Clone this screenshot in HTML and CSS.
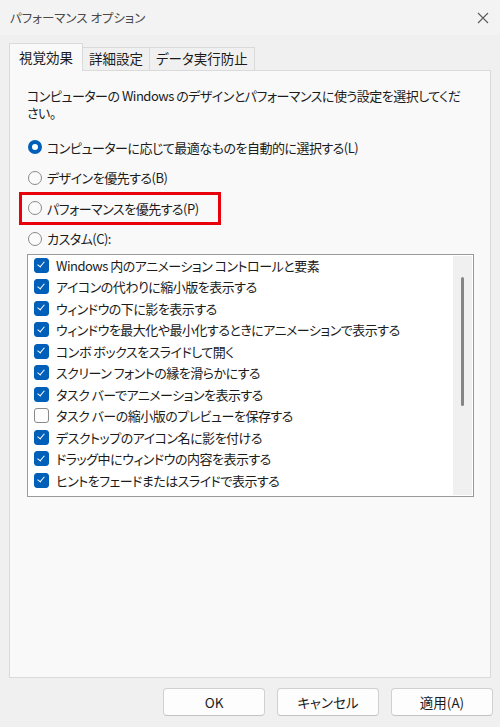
FILE: index.html
```html
<!DOCTYPE html>
<html lang="ja">
<head>
    <meta charset="UTF-8">
    <meta name="viewport" content="width=device-width, initial-scale=1.0">
    <title>パフォーマンス オプション</title>
    <link rel="stylesheet" href="styles.css">
</head>
<body>
    <div class="window">
        <div class="titlebar">
            <span class="title">パフォーマンス オプション</span>
            <svg class="close" width="12" height="12" viewBox="0 0 12 12">
                <path d="M1 1 L11 11 M11 1 L1 11" stroke="#5a5a5a" stroke-width="1.1" fill="none"/>
            </svg>
        </div>

        <div class="tabs">
            <div class="tab active">視覚効果</div>
            <div class="tab">詳細設定</div>
            <div class="tab">データ実行防止</div>
        </div>

        <div class="panel">
            <p class="intro">コンピューターの Windows のデザインとパフォーマンスに使う設定を選択してください。</p>

            <div class="options">
                <label class="radio-row">
                    <span class="radio checked"></span>コンピューターに応じて最適なものを自動的に選択する(L)
                </label>
                <label class="radio-row">
                    <span class="radio"></span>デザインを優先する(B)
                </label>
                <label class="radio-row highlight">
                    <span class="radio"></span>パフォーマンスを優先する(P)
                </label>
                <label class="radio-row">
                    <span class="radio"></span>カスタム(C):
                </label>
            </div>

            <div class="listbox">
                <ul class="items">
                    <li><span class="check on"></span>Windows 内のアニメーション コントロールと要素</li>
                    <li><span class="check on"></span>アイコンの代わりに縮小版を表示する</li>
                    <li><span class="check on"></span>ウィンドウの下に影を表示する</li>
                    <li><span class="check on"></span>ウィンドウを最大化や最小化するときにアニメーションで表示する</li>
                    <li><span class="check on"></span>コンボ ボックスをスライドして開く</li>
                    <li><span class="check on"></span>スクリーン フォントの縁を滑らかにする</li>
                    <li><span class="check on"></span>タスク バーでアニメーションを表示する</li>
                    <li><span class="check"></span>タスク バーの縮小版のプレビューを保存する</li>
                    <li><span class="check on"></span>デスクトップのアイコン名に影を付ける</li>
                    <li><span class="check on"></span>ドラッグ中にウィンドウの内容を表示する</li>
                    <li><span class="check on"></span>ヒントをフェードまたはスライドで表示する</li>
                </ul>
                <div class="scrollbar">
                    <div class="thumb"></div>
                </div>
            </div>
        </div>

        <div class="buttons">
            <button class="btn">OK</button>
            <button class="btn">キャンセル</button>
            <button class="btn">適用(A)</button>
        </div>
    </div>
</body>
</html>
```

FILE: styles.css
```css
/* Windows 11 style "performance options" dialog */
html, body {
    margin: 0;
    padding: 0;
}
body {
    font-family: "Noto Sans CJK JP", "Noto Sans", sans-serif;
    font-feature-settings: "palt";
    font-size: 13px;
    color: #1b1b1b;
    background: #f0f0f0;
}
.window {
    width: 500px;
    height: 727px;
    display: flex;
    flex-direction: column;
    background: #f0f0f0;
    overflow: hidden;
}

/* title bar */
.titlebar {
    height: 35px;
    flex: none;
    display: flex;
    align-items: center;
    justify-content: space-between;
    padding: 0 11px 0 10px;
    background: #f3f3f3;
}
.title {
    font-size: 12.5px;
    color: #4a4a4a;
}

/* tabs */
.tabs {
    display: flex;
    align-items: flex-end;
    height: 27px;
    margin: 8px 0 0 9px;
}
.tab {
    height: 22px;
    line-height: 21px;
    padding: 0 6px;
    font-size: 13.5px;
    border: 1px solid #dadada;
    border-bottom: none;
    border-left: none;
    background: #f0f0f0;
}
.tab.active {
    height: 27px;
    line-height: 26px;
    padding: 0 9px;
    border-left: 1px solid #dadada;
    background: #f9f9f9;
    position: relative;
    top: 1px;
}

/* panel */
.panel {
    height: 606px;
    margin: 0 9px;
    border: 1px solid #dadada;
    background: #f9f9f9;
    padding: 0 0 0 17px;
    letter-spacing: -0.5px;
}
.intro {
    margin: 16px 0 0;
    width: 440px;
    line-height: 17px;
}
.options {
    margin-top: 17px;
    display: flex;
    flex-direction: column;
    gap: 12.5px;
}
.radio-row {
    display: flex;
    align-items: center;
    height: 18px;
    padding-left: 1px;
}
.radio-row.highlight {
    position: relative;
}
/* red frame drawn round the third choice */
.radio-row.highlight::before {
    content: "";
    position: absolute;
    left: -8px;
    width: 196px;
    top: -7px;
    bottom: -8px;
    border: 3px solid #e8000b;
}
.radio {
    width: 12px;
    height: 12px;
    border: 1px solid #8a8a8a;
    border-radius: 50%;
    background: #fbfbfb;
    margin-right: 5px;
    flex: none;
}
.radio.checked {
    width: 6px;
    height: 6px;
    border: 4px solid #005fb8;
    background: #fff;
}

/* list of effects */
.listbox {
    margin-top: 6px;
    width: 445px;
    height: 241px;
    border: 1px solid #9a9a9a;
    background: #fff;
    display: flex;
    overflow: hidden;
}
.items {
    list-style: none;
    margin: 0;
    padding: 0 0 0 6px;
    flex: 1;
}
.items li {
    height: 21.5px;
    display: flex;
    align-items: center;
    white-space: nowrap;
}
.check {
    width: 13px;
    height: 13px;
    border: 1px solid #8a8a8a;
    border-radius: 3px;
    background: #fdfdfd;
    margin-right: 7px;
    flex: none;
    position: relative;
}
.check.on {
    border-color: #005fb8;
    background: #005fb8;
}
.check.on::after {
    content: "";
    position: absolute;
    left: 4px;
    top: 1.5px;
    width: 3px;
    height: 6px;
    border: solid #fff;
    border-width: 0 1.2px 1.2px 0;
    transform: rotate(40deg);
}
.scrollbar {
    width: 19px;
    flex: none;
    background: #f0f0f0;
    margin: 1px 1px 1px 0;
    position: relative;
}
.thumb {
    position: absolute;
    left: 8px;
    top: 21px;
    width: 3px;
    height: 129px;
    border-radius: 2px;
    background: #858585;
}

/* dialog buttons */
.buttons {
    display: flex;
    justify-content: flex-end;
    gap: 12px;
    padding: 10px 7px 0 0;
}
.btn {
    width: 102px;
    height: 28px;
    font-family: inherit;
    font-feature-settings: "palt";
    font-size: 13.5px;
    color: #1b1b1b;
    background: #fdfdfd;
    border: 1px solid #d0d0d0;
    border-bottom-color: #c2c2c2;
    border-radius: 4px;
}
```
